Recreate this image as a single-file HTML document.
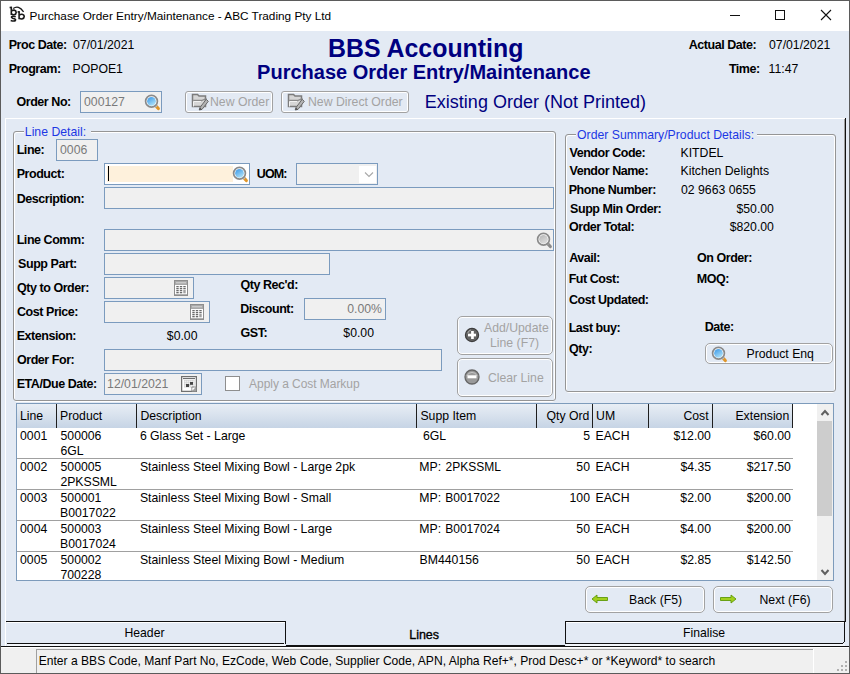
<!DOCTYPE html>
<html><head><meta charset="utf-8"><style>
html,body{margin:0;padding:0;width:850px;height:674px;overflow:hidden;background:#fff;}
body{position:relative;font-family:"Liberation Sans",sans-serif;}
.t{position:absolute;white-space:pre;}
.b{position:absolute;}
</style></head><body>
<div class="b" style="left:0px;top:0px;width:850px;height:674px;background:#5B5B5B;"></div>
<div class="b" style="left:1px;top:1px;width:848px;height:30px;background:#FFFFFF;"></div>
<div class="b" style="left:1px;top:31px;width:848px;height:616px;background:#E3EAF4;"></div>
<div class="b" style="left:1px;top:647px;width:848px;height:26px;background:#F0F0F0;"></div>
<svg class="b" style="left:0px;top:0px" width="30" height="30" viewBox="0 0 30 30">
<g fill="none" stroke="#1A1A1A" stroke-width="1.6">
<path d="M11.3 6.8 V15"/><path d="M9.6 7.5 H12"/>
<path d="M11.5 10.9 Q12.8 10 14.2 10.1 Q16.2 10.5 16.2 12.4 Q16.1 14.4 14.2 14.7 Q12.7 14.9 11.5 14"/>
<path d="M15.7 16.7 Q13.2 15.8 11.8 16.6 Q10.9 17.5 12.6 18.2 L14.3 18.7 Q16 19.3 15.4 20.5 Q14 21.6 10.7 20.4"/>
<path d="M19.1 11.2 V19.2"/><path d="M17.6 11.9 H19.6"/>
<path d="M19.3 15.1 Q20.6 14.2 22 14.3 Q24.2 14.7 24.2 16.6 Q24.1 18.6 22 18.9 Q20.5 19.1 19.3 18.2"/>
</g>
<path d="M13.2 8.6 Q18.5 4.6 23.6 11.8" fill="none" stroke="#1A1A1A" stroke-width="1.3"/>
</svg>
<div class="t" style="left:29.56px;top:11px;font-size:11.8px;line-height:11.8px;font-weight:normal;color:#000;">Purchase Order Entry/Maintenance - ABC Trading Pty Ltd</div>
<div class="b" style="left:730px;top:15px;width:10px;height:1px;background:#111;"></div>
<div class="b" style="left:775px;top:10px;width:10px;height:10px;border:1px solid #111;box-sizing:border-box;"></div>
<svg class="b" style="left:820px;top:9px" width="12" height="12" viewBox="0 0 12 12"><path d="M1 1 L11 11 M11 1 L1 11" stroke="#111" stroke-width="1.1"/></svg>
<div class="t" style="left:8.69px;top:39px;font-size:12.5px;line-height:12.5px;font-weight:bold;color:#000;letter-spacing:-0.45px;">Proc Date:</div>
<div class="t" style="left:73.01px;top:39px;font-size:12.25px;line-height:12.25px;font-weight:normal;color:#000;">07/01/2021</div>
<div class="t" style="left:8.69px;top:63px;font-size:12.5px;line-height:12.5px;font-weight:bold;color:#000;letter-spacing:-0.45px;">Program:</div>
<div class="t" style="left:72.52px;top:63px;font-size:12.25px;line-height:12.25px;font-weight:normal;color:#000;">POPOE1</div>
<div class="t" style="left:327.98px;top:36px;font-size:24.9px;line-height:24.9px;font-weight:bold;color:#000080;">BBS Accounting</div>
<div class="t" style="left:257.10px;top:62px;font-size:20.0px;line-height:20.0px;font-weight:bold;color:#000080;">Purchase Order Entry/Maintenance</div>
<div class="t" style="left:688.69px;top:39px;font-size:12.5px;line-height:12.5px;font-weight:bold;color:#000;letter-spacing:-0.45px;">Actual Date:</div>
<div class="t" style="left:769.01px;top:39px;font-size:12.25px;line-height:12.25px;font-weight:normal;color:#000;">07/01/2021</div>
<div class="t" style="left:728.88px;top:63px;font-size:12.5px;line-height:12.5px;font-weight:bold;color:#000;letter-spacing:-0.45px;">Time:</div>
<div class="t" style="left:768.58px;top:63px;font-size:12.25px;line-height:12.25px;font-weight:normal;color:#000;">11:47</div>
<div class="t" style="left:16.50px;top:96px;font-size:12.5px;line-height:12.5px;font-weight:bold;color:#000;letter-spacing:-0.45px;">Order No:</div>
<div class="b" style="left:80px;top:91px;width:82px;height:22px;border:1px solid #7B9BBE;background:#F0F0F0;box-sizing:border-box;"></div>
<div class="t" style="left:84.01px;top:96px;font-size:12.25px;line-height:12.25px;font-weight:normal;color:#7A7A7A;">000127</div>
<svg class="b" style="left:144px;top:93.5px" width="17" height="17" viewBox="0 0 17 17">
<defs><linearGradient id="mg1" x1="0.2" y1="0" x2="0.8" y2="1"><stop offset="0" stop-color="#3F9BE8"/><stop offset="1" stop-color="#B5E6FA"/></linearGradient></defs>
<path d="M12 12 L14.3 14.5" stroke="#E0962A" stroke-width="3.2" stroke-linecap="round"/>
<path d="M11.2 11.2 L12.6 12.6" stroke="#B8C8D8" stroke-width="2.4"/>
<circle cx="7.5" cy="7.3" r="5.9" fill="#FFFFFF" stroke="#8A8A8A" stroke-width="1.7"/>
<circle cx="7.5" cy="7.3" r="4.4" fill="url(#mg1)"/>
</svg>
<div class="b" style="left:185px;top:91px;width:88px;height:22px;border:1px solid #A2A2A2;border-radius:3px;box-shadow:inset 0 0 0 1px #FFFFFF;box-sizing:border-box;background:transparent;"></div>
<svg class="b" style="left:191px;top:93px" width="19" height="19" viewBox="0 0 19 19">
<path d="M1.5 1.5 H6.5 L8 3 H14.5 V13.5 H1.5 Z" fill="#D6D6D6" stroke="#7C7C7C" stroke-width="1.5"/>
<path d="M2.2 7.5 H10.5 L15.5 5.5" fill="none" stroke="#8A8A8A" stroke-width="1.3"/>
<path d="M2.5 13.5 L2.5 8.5 H10" fill="none" stroke="#F2F2F2" stroke-width="1"/>
<path d="M9 14.5 L15.2 6.3 L17.3 8.3 L11 16.4 L8.2 17 Z" fill="#B4B4B4" stroke="#6A6A6A" stroke-width="1"/>
<path d="M8.2 17 L9 14.5 L11 16.4 Z" fill="#505050"/>
</svg>
<div class="t" style="left:210.02px;top:96px;font-size:12.25px;line-height:12.25px;font-weight:normal;color:#A3A3A3;">New Order</div>
<div class="b" style="left:281px;top:91px;width:128px;height:22px;border:1px solid #A2A2A2;border-radius:3px;box-shadow:inset 0 0 0 1px #FFFFFF;box-sizing:border-box;background:transparent;"></div>
<svg class="b" style="left:287px;top:93px" width="19" height="19" viewBox="0 0 19 19">
<path d="M1.5 1.5 H6.5 L8 3 H14.5 V13.5 H1.5 Z" fill="#D6D6D6" stroke="#7C7C7C" stroke-width="1.5"/>
<path d="M2.2 7.5 H10.5 L15.5 5.5" fill="none" stroke="#8A8A8A" stroke-width="1.3"/>
<path d="M2.5 13.5 L2.5 8.5 H10" fill="none" stroke="#F2F2F2" stroke-width="1"/>
<path d="M9 14.5 L15.2 6.3 L17.3 8.3 L11 16.4 L8.2 17 Z" fill="#B4B4B4" stroke="#6A6A6A" stroke-width="1"/>
<path d="M8.2 17 L9 14.5 L11 16.4 Z" fill="#505050"/>
</svg>
<div class="t" style="left:308.02px;top:96px;font-size:12.25px;line-height:12.25px;font-weight:normal;color:#A3A3A3;">New Direct Order</div>
<div class="t" style="left:424.86px;top:93.3px;font-size:18.0px;line-height:18.0px;font-weight:normal;color:#000080;">Existing Order (Not Printed)</div>
<div class="b" style="left:5px;top:118px;width:841px;height:528px;border-top:1px solid #FFFFFF;border-left:1px solid #FFFFFF;box-sizing:border-box;"></div>
<div class="b" style="left:845px;top:118px;width:1px;height:504px;background:#111;"></div>
<div class="b" style="left:844px;top:119px;width:1px;height:502px;background:#A0A0A0;"></div>
<div class="b" style="left:14px;top:132px;width:541px;height:270px;border:1px solid #FFFFFF;border-radius:3px;box-sizing:border-box;"></div>
<div class="b" style="left:13px;top:131px;width:543px;height:270px;border:1px solid #959595;border-radius:3px;box-sizing:border-box;"></div>
<div class="b" style="left:24px;top:130px;width:67px;height:4px;background:#E3EAF4;"></div>
<div class="t" style="left:24.82px;top:126px;font-size:12.25px;line-height:12.25px;font-weight:normal;color:#1C38E4;">Line Detail:</div>
<div class="b" style="left:566px;top:135px;width:269px;height:258px;border:1px solid #FFFFFF;border-radius:3px;box-sizing:border-box;"></div>
<div class="b" style="left:565px;top:134px;width:271px;height:258px;border:1px solid #959595;border-radius:3px;box-sizing:border-box;"></div>
<div class="b" style="left:576px;top:133px;width:181px;height:4px;background:#E3EAF4;"></div>
<div class="t" style="left:577.05px;top:129px;font-size:12.25px;line-height:12.25px;font-weight:normal;color:#1C38E4;">Order Summary/Product Details:</div>
<div class="t" style="left:16.69px;top:144px;font-size:12.5px;line-height:12.5px;font-weight:bold;color:#000;letter-spacing:-0.45px;">Line:</div>
<div class="b" style="left:56px;top:139px;width:42px;height:22px;border:1px solid #7B9BBE;background:#F0F0F0;box-sizing:border-box;"></div>
<div class="t" style="left:60.01px;top:144px;font-size:12.25px;line-height:12.25px;font-weight:normal;color:#7A7A7A;">0006</div>
<div class="t" style="left:16.69px;top:168px;font-size:12.5px;line-height:12.5px;font-weight:bold;color:#000;letter-spacing:-0.45px;">Product:</div>
<div class="b" style="left:104px;top:163px;width:146px;height:22px;border:1px solid #7B9BBE;background:#FFFFFF;box-sizing:border-box;"></div>
<div class="b" style="left:107px;top:166px;width:126px;height:16px;background:#FEF1DC;"></div>
<div class="b" style="left:108px;top:166px;width:1px;height:15px;background:#000;"></div>
<svg class="b" style="left:232px;top:165.5px" width="17" height="17" viewBox="0 0 17 17">
<defs><linearGradient id="mg2" x1="0.2" y1="0" x2="0.8" y2="1"><stop offset="0" stop-color="#3F9BE8"/><stop offset="1" stop-color="#B5E6FA"/></linearGradient></defs>
<path d="M12 12 L14.3 14.5" stroke="#E0962A" stroke-width="3.2" stroke-linecap="round"/>
<path d="M11.2 11.2 L12.6 12.6" stroke="#B8C8D8" stroke-width="2.4"/>
<circle cx="7.5" cy="7.3" r="5.9" fill="#FFFFFF" stroke="#8A8A8A" stroke-width="1.7"/>
<circle cx="7.5" cy="7.3" r="4.4" fill="url(#mg2)"/>
</svg>
<div class="t" style="left:256.75px;top:168px;font-size:12.5px;line-height:12.5px;font-weight:bold;color:#000;letter-spacing:-0.9px;">UOM:</div>
<div class="b" style="left:296px;top:163px;width:82px;height:22px;border:1px solid #7B9BBE;background:#F0F0F0;box-sizing:border-box;"></div>
<div class="b" style="left:359px;top:166px;width:17px;height:17px;background:#FFFFFF;"></div>
<svg class="b" style="left:364px;top:171px" width="10" height="8" viewBox="0 0 10 8"><path d="M1 1.5 L5 5.5 L9 1.5" fill="none" stroke="#A8A8A8" stroke-width="1.1"/></svg>
<div class="t" style="left:16.69px;top:193px;font-size:12.5px;line-height:12.5px;font-weight:bold;color:#000;letter-spacing:-0.45px;">Description:</div>
<div class="b" style="left:104px;top:187px;width:450px;height:22px;border:1px solid #7B9BBE;background:#F0F0F0;box-sizing:border-box;"></div>
<div class="t" style="left:16.69px;top:234px;font-size:12.5px;line-height:12.5px;font-weight:bold;color:#000;letter-spacing:-0.45px;">Line Comm:</div>
<div class="b" style="left:104px;top:229px;width:450px;height:22px;border:1px solid #7B9BBE;background:#F0F0F0;box-sizing:border-box;"></div>
<svg class="b" style="left:536px;top:231.5px" width="17" height="17" viewBox="0 0 17 17">
<defs><linearGradient id="mg3" x1="0.2" y1="0" x2="0.8" y2="1"><stop offset="0" stop-color="#B8B8B8"/><stop offset="1" stop-color="#E0E0E0"/></linearGradient></defs>
<path d="M12 12 L14.3 14.5" stroke="#8A8A8A" stroke-width="3.2" stroke-linecap="round"/>
<path d="M11.2 11.2 L12.6 12.6" stroke="#A0A0A0" stroke-width="2.4"/>
<circle cx="7.5" cy="7.3" r="5.9" fill="#FFFFFF" stroke="#8A8A8A" stroke-width="1.7"/>
<circle cx="7.5" cy="7.3" r="4.4" fill="url(#mg3)"/>
</svg>
<div class="t" style="left:18.12px;top:258px;font-size:12.5px;line-height:12.5px;font-weight:bold;color:#000;letter-spacing:-0.45px;">Supp Part:</div>
<div class="b" style="left:104px;top:253px;width:226px;height:22px;border:1px solid #7B9BBE;background:#F0F0F0;box-sizing:border-box;"></div>
<div class="t" style="left:17.00px;top:282px;font-size:12.5px;line-height:12.5px;font-weight:bold;color:#000;letter-spacing:-0.45px;">Qty to Order:</div>
<div class="b" style="left:104px;top:277px;width:90px;height:22px;border:1px solid #7B9BBE;background:#F0F0F0;box-sizing:border-box;"></div>
<svg class="b" style="left:174px;top:280px" width="14" height="16" viewBox="0 0 14 16">
<rect x="0" y="0" width="14" height="16" fill="#8E8E8E"/>
<rect x="1" y="1" width="12" height="4" fill="#A9A9A9"/>
<rect x="2" y="2" width="10" height="1.4" fill="#C9C9C9"/>
<rect x="1" y="5" width="12" height="9.3" fill="#FFFFFF"/>
<g fill="#6A6A6A"><rect x="2.3" y="6" width="2.4" height="1.3"/><rect x="5.8" y="6" width="2.4" height="1.3"/><rect x="9.3" y="6" width="2.4" height="1.3"/>
<rect x="2.3" y="8" width="2.4" height="1.3"/><rect x="5.8" y="8" width="2.4" height="1.3"/><rect x="9.3" y="8" width="2.4" height="1.3"/>
<rect x="2.3" y="10" width="2.4" height="1.3"/><rect x="5.8" y="10" width="2.4" height="1.3"/>
<rect x="2.3" y="12" width="2.4" height="1.3"/><rect x="5.8" y="12" width="2.4" height="1.3"/></g>
<rect x="9.3" y="10" width="2.4" height="3.3" fill="#A0A0A0"/>
</svg>
<div class="t" style="left:17.00px;top:306px;font-size:12.5px;line-height:12.5px;font-weight:bold;color:#000;letter-spacing:-0.45px;">Cost Price:</div>
<div class="b" style="left:104px;top:301px;width:106px;height:22px;border:1px solid #7B9BBE;background:#F0F0F0;box-sizing:border-box;"></div>
<svg class="b" style="left:190px;top:304px" width="14" height="16" viewBox="0 0 14 16">
<rect x="0" y="0" width="14" height="16" fill="#8E8E8E"/>
<rect x="1" y="1" width="12" height="4" fill="#A9A9A9"/>
<rect x="2" y="2" width="10" height="1.4" fill="#C9C9C9"/>
<rect x="1" y="5" width="12" height="9.3" fill="#FFFFFF"/>
<g fill="#6A6A6A"><rect x="2.3" y="6" width="2.4" height="1.3"/><rect x="5.8" y="6" width="2.4" height="1.3"/><rect x="9.3" y="6" width="2.4" height="1.3"/>
<rect x="2.3" y="8" width="2.4" height="1.3"/><rect x="5.8" y="8" width="2.4" height="1.3"/><rect x="9.3" y="8" width="2.4" height="1.3"/>
<rect x="2.3" y="10" width="2.4" height="1.3"/><rect x="5.8" y="10" width="2.4" height="1.3"/>
<rect x="2.3" y="12" width="2.4" height="1.3"/><rect x="5.8" y="12" width="2.4" height="1.3"/></g>
<rect x="9.3" y="10" width="2.4" height="3.3" fill="#A0A0A0"/>
</svg>
<div class="t" style="left:16.69px;top:330px;font-size:12.5px;line-height:12.5px;font-weight:bold;color:#000;letter-spacing:-0.45px;">Extension:</div>
<div class="t" style="right:652.54px;top:330px;font-size:12.25px;line-height:12.25px;font-weight:normal;color:#000;">$0.00</div>
<div class="t" style="left:240.50px;top:279px;font-size:12.5px;line-height:12.5px;font-weight:bold;color:#000;letter-spacing:-0.45px;">Qty Rec'd:</div>
<div class="t" style="left:240.19px;top:303px;font-size:12.5px;line-height:12.5px;font-weight:bold;color:#000;letter-spacing:-0.45px;">Discount:</div>
<div class="b" style="left:304px;top:298px;width:82px;height:22px;border:1px solid #7B9BBE;background:#F0F0F0;box-sizing:border-box;"></div>
<div class="t" style="right:468.07px;top:303px;font-size:12.25px;line-height:12.25px;font-weight:normal;color:#7A7A7A;">0.00%</div>
<div class="t" style="left:240.50px;top:327px;font-size:12.5px;line-height:12.5px;font-weight:bold;color:#000;letter-spacing:-0.45px;">GST:</div>
<div class="t" style="right:476.04px;top:327px;font-size:12.25px;line-height:12.25px;font-weight:normal;color:#000;">$0.00</div>
<div class="t" style="left:17.00px;top:354px;font-size:12.5px;line-height:12.5px;font-weight:bold;color:#000;letter-spacing:-0.45px;">Order For:</div>
<div class="b" style="left:104px;top:349px;width:338px;height:22px;border:1px solid #7B9BBE;background:#F0F0F0;box-sizing:border-box;"></div>
<div class="t" style="left:16.69px;top:378px;font-size:12.5px;line-height:12.5px;font-weight:bold;color:#000;letter-spacing:-0.45px;">ETA/Due Date:</div>
<div class="b" style="left:104px;top:373px;width:98px;height:22px;border:1px solid #7B9BBE;background:#F0F0F0;box-sizing:border-box;"></div>
<div class="t" style="left:107.08px;top:378px;font-size:12.25px;line-height:12.25px;font-weight:normal;color:#7A7A7A;">12/01/2021</div>
<svg class="b" style="left:181px;top:376px" width="16" height="16" viewBox="0 0 16 16">
<rect x="0.6" y="0.6" width="14.8" height="14.8" fill="#FFFFFF" stroke="#707070" stroke-width="1.3"/>
<rect x="2" y="2" width="12" height="1.1" fill="#6E6E6E"/>
<rect x="3" y="4" width="10.5" height="7.6" fill="#CFCFCF"/>
<g fill="#FFFFFF"><rect x="3.6" y="4.6" width="1.2" height="1.2"/><rect x="5.6" y="4.6" width="1.2" height="1.2"/><rect x="7.6" y="4.6" width="1.2" height="1.2"/><rect x="9.6" y="4.6" width="1.2" height="1.2"/><rect x="11.6" y="4.6" width="1.2" height="1.2"/>
<rect x="3.6" y="6.6" width="1.2" height="1.2"/><rect x="5.6" y="6.6" width="1.2" height="1.2"/><rect x="7.6" y="6.6" width="1.2" height="1.2"/><rect x="11.6" y="6.6" width="1.2" height="1.2"/>
<rect x="3.6" y="8.6" width="1.2" height="1.2"/><rect x="9.6" y="8.6" width="1.2" height="1.2"/><rect x="11.6" y="8.6" width="1.2" height="1.2"/>
<rect x="3.6" y="10.4" width="1.2" height="1.2"/><rect x="5.6" y="10.4" width="1.2" height="1.2"/><rect x="7.6" y="10.4" width="1.2" height="1.2"/><rect x="9.6" y="10.4" width="1.2" height="1.2"/></g>
<rect x="5" y="8" width="3" height="3" fill="#454545"/><rect x="9" y="6" width="3" height="2.8" fill="#454545"/>
<path d="M10.6 15.4 L15.4 10.6 V15.4 Z" fill="#A0A0A0"/>
<path d="M10.8 15.2 V11 H15" fill="none" stroke="#808080" stroke-width="0.8"/>
</svg>
<div class="b" style="left:225px;top:376px;width:15px;height:15px;border:1.5px solid #8E8E8E;background:#FFFFFF;box-sizing:border-box;"></div>
<div class="t" style="left:249.10px;top:378px;font-size:12.0px;line-height:12.0px;font-weight:normal;color:#A3A3A3;letter-spacing:-0.05px;">Apply a Cost Markup</div>
<div class="b" style="left:457px;top:316px;width:96px;height:39px;border:1px solid #A2A2A2;border-radius:5px;box-shadow:inset 0 0 0 1px #FFFFFF;box-sizing:border-box;background:transparent;"></div>
<svg class="b" style="left:463px;top:326px" width="18" height="18" viewBox="0 0 18 18">
<circle cx="9" cy="9" r="6.6" fill="#636363" stroke="#3E3E3E" stroke-width="1.2"/>
<path d="M4.6 7.2 A5.2 5.2 0 0 1 8 3.9" fill="none" stroke="#B8B8B8" stroke-width="0.9"/>
<rect x="5" y="7.7" width="8" height="2.7" fill="#FFFFFF"/><rect x="8.1" y="5" width="2.7" height="8" fill="#FFFFFF"/></svg>
<div class="t" style="left:484.00px;top:322px;font-size:12.25px;line-height:12.25px;font-weight:normal;color:#A3A3A3;">Add/Update</div>
<div class="t" style="left:490.02px;top:337px;font-size:12.25px;line-height:12.25px;font-weight:normal;color:#A3A3A3;">Line (F7)</div>
<div class="b" style="left:457px;top:358px;width:96px;height:39px;border:1px solid #A2A2A2;border-radius:5px;box-shadow:inset 0 0 0 1px #FFFFFF;box-sizing:border-box;background:transparent;"></div>
<svg class="b" style="left:462.5px;top:367.8px" width="18" height="18" viewBox="0 0 18 18">
<circle cx="9" cy="9" r="7" fill="#9A9A9A" stroke="#666666" stroke-width="1.3"/>
<path d="M3.9 8 A5.4 5.4 0 0 1 14.1 8" fill="none" stroke="#C6C6C6" stroke-width="0.9"/>
<rect x="4.5" y="7.3" width="9" height="3" fill="#FFFFFF"/></svg>
<div class="t" style="left:487.89px;top:372px;font-size:12.25px;line-height:12.25px;font-weight:normal;color:#A3A3A3;">Clear Line</div>
<div class="t" style="left:569.44px;top:147px;font-size:12.5px;line-height:12.5px;font-weight:bold;color:#000;letter-spacing:-0.45px;">Vendor Code:</div>
<div class="t" style="left:680.52px;top:147px;font-size:12.25px;line-height:12.25px;font-weight:normal;color:#000;">KITDEL</div>
<div class="t" style="left:569.44px;top:165px;font-size:12.5px;line-height:12.5px;font-weight:bold;color:#000;letter-spacing:-0.45px;">Vendor Name:</div>
<div class="t" style="left:680.52px;top:165px;font-size:12.25px;line-height:12.25px;font-weight:normal;color:#000;">Kitchen Delights</div>
<div class="t" style="left:568.69px;top:184px;font-size:12.5px;line-height:12.5px;font-weight:bold;color:#000;letter-spacing:-0.45px;">Phone Number:</div>
<div class="t" style="left:681.01px;top:184px;font-size:12.25px;line-height:12.25px;font-weight:normal;color:#000;">02 9663 0655</div>
<div class="t" style="left:570.12px;top:203px;font-size:12.5px;line-height:12.5px;font-weight:bold;color:#000;letter-spacing:-0.45px;">Supp Min Order:</div>
<div class="t" style="right:76.09px;top:203px;font-size:12.25px;line-height:12.25px;font-weight:normal;color:#000;">$50.00</div>
<div class="t" style="left:569.00px;top:221px;font-size:12.5px;line-height:12.5px;font-weight:bold;color:#000;letter-spacing:-0.45px;">Order Total:</div>
<div class="t" style="right:76.07px;top:221px;font-size:12.25px;line-height:12.25px;font-weight:normal;color:#000;">$820.00</div>
<div class="t" style="left:569.19px;top:252px;font-size:12.5px;line-height:12.5px;font-weight:bold;color:#000;letter-spacing:-0.45px;">Avail:</div>
<div class="t" style="left:697.00px;top:252px;font-size:12.5px;line-height:12.5px;font-weight:bold;color:#000;letter-spacing:-0.45px;">On Order:</div>
<div class="t" style="left:568.69px;top:273px;font-size:12.5px;line-height:12.5px;font-weight:bold;color:#000;letter-spacing:-0.45px;">Fut Cost:</div>
<div class="t" style="left:696.69px;top:273px;font-size:12.5px;line-height:12.5px;font-weight:bold;color:#000;letter-spacing:-0.45px;">MOQ:</div>
<div class="t" style="left:569.00px;top:294px;font-size:12.5px;line-height:12.5px;font-weight:bold;color:#000;letter-spacing:-0.45px;">Cost Updated:</div>
<div class="t" style="left:568.69px;top:322px;font-size:12.5px;line-height:12.5px;font-weight:bold;color:#000;letter-spacing:-0.45px;">Last buy:</div>
<div class="t" style="left:704.69px;top:321px;font-size:12.5px;line-height:12.5px;font-weight:bold;color:#000;letter-spacing:-0.45px;">Date:</div>
<div class="t" style="left:569.00px;top:343px;font-size:12.5px;line-height:12.5px;font-weight:bold;color:#000;letter-spacing:-0.45px;">Qty:</div>
<div class="b" style="left:705px;top:343px;width:128px;height:21px;border:1px solid #A2A2A2;border-radius:5px;box-shadow:inset 0 0 0 1px #FFFFFF;box-sizing:border-box;background:transparent;"></div>
<svg class="b" style="left:711px;top:345.5px" width="17" height="17" viewBox="0 0 17 17">
<defs><linearGradient id="mg4" x1="0.2" y1="0" x2="0.8" y2="1"><stop offset="0" stop-color="#3F9BE8"/><stop offset="1" stop-color="#B5E6FA"/></linearGradient></defs>
<path d="M12 12 L14.3 14.5" stroke="#E0962A" stroke-width="3.2" stroke-linecap="round"/>
<path d="M11.2 11.2 L12.6 12.6" stroke="#B8C8D8" stroke-width="2.4"/>
<circle cx="7.5" cy="7.3" r="5.9" fill="#FFFFFF" stroke="#8A8A8A" stroke-width="1.7"/>
<circle cx="7.5" cy="7.3" r="4.4" fill="url(#mg4)"/>
</svg>
<div class="t" style="left:746.52px;top:348px;font-size:12.25px;line-height:12.25px;font-weight:normal;color:#000;">Product Enq</div>
<div class="b" style="left:16px;top:403px;width:818px;height:178px;border:1px solid #7D9BBB;background:#FFFFFF;box-sizing:border-box;"></div>
<div class="b" style="left:17px;top:404px;width:776px;height:24px;background:linear-gradient(#E8EEF5,#C6D4E5);"></div>
<div class="b" style="left:56px;top:404px;width:1px;height:24px;background:#1E1E1E;"></div>
<div class="b" style="left:136px;top:404px;width:1px;height:24px;background:#1E1E1E;"></div>
<div class="b" style="left:416px;top:404px;width:1px;height:24px;background:#1E1E1E;"></div>
<div class="b" style="left:536px;top:404px;width:1px;height:24px;background:#1E1E1E;"></div>
<div class="b" style="left:592px;top:404px;width:1px;height:24px;background:#1E1E1E;"></div>
<div class="b" style="left:648px;top:404px;width:1px;height:24px;background:#1E1E1E;"></div>
<div class="b" style="left:712px;top:404px;width:1px;height:24px;background:#1E1E1E;"></div>
<div class="b" style="left:792px;top:404px;width:1px;height:24px;background:#1E1E1E;"></div>
<div class="t" style="left:20.02px;top:410px;font-size:12.25px;line-height:12.25px;font-weight:normal;color:#000;">Line</div>
<div class="t" style="left:60.02px;top:410px;font-size:12.25px;line-height:12.25px;font-weight:normal;color:#000;">Product</div>
<div class="t" style="left:140.42px;top:410px;font-size:12.25px;line-height:12.25px;font-weight:normal;color:#000;">Description</div>
<div class="t" style="left:420.45px;top:410px;font-size:12.25px;line-height:12.25px;font-weight:normal;color:#000;">Supp Item</div>
<div class="t" style="right:260.66px;top:410px;font-size:12.25px;line-height:12.25px;font-weight:normal;color:#000;">Qty Ord</div>
<div class="t" style="left:596.08px;top:410px;font-size:12.25px;line-height:12.25px;font-weight:normal;color:#000;">UM</div>
<div class="t" style="right:141.42px;top:410px;font-size:12.25px;line-height:12.25px;font-weight:normal;color:#000;">Cost</div>
<div class="t" style="right:60.74px;top:410px;font-size:12.25px;line-height:12.25px;font-weight:normal;color:#000;">Extension</div>
<div class="t" style="left:20.01px;top:430px;font-size:12.25px;line-height:12.25px;font-weight:normal;color:#000;">0001</div>
<div class="t" style="left:60.51px;top:430px;font-size:12.25px;line-height:12.25px;font-weight:normal;color:#000;">500006</div>
<div class="t" style="left:60.39px;top:445px;font-size:12.25px;line-height:12.25px;font-weight:normal;color:#000;">6GL</div>
<div class="t" style="left:139.89px;top:430px;font-size:12.25px;line-height:12.25px;font-weight:normal;color:#000;">6 Glass Set - Large</div>
<div class="t" style="left:422.99px;top:430px;font-size:12.25px;line-height:12.25px;font-weight:normal;color:#000;">6GL</div>
<div class="t" style="right:260.00px;top:430px;font-size:12.25px;line-height:12.25px;font-weight:normal;color:#000;">5</div>
<div class="t" style="left:595.52px;top:430px;font-size:12.25px;line-height:12.25px;font-weight:normal;color:#000;">EACH</div>
<div class="t" style="right:139.09px;top:430px;font-size:12.25px;line-height:12.25px;font-weight:normal;color:#000;">$12.00</div>
<div class="t" style="right:59.09px;top:430px;font-size:12.25px;line-height:12.25px;font-weight:normal;color:#000;">$60.00</div>
<div class="b" style="left:17px;top:458px;width:776px;height:1px;background:#A0A0A0;"></div>
<div class="t" style="left:20.01px;top:461px;font-size:12.25px;line-height:12.25px;font-weight:normal;color:#000;">0002</div>
<div class="t" style="left:60.51px;top:461px;font-size:12.25px;line-height:12.25px;font-weight:normal;color:#000;">500005</div>
<div class="t" style="left:60.39px;top:476px;font-size:12.25px;line-height:12.25px;font-weight:normal;color:#000;">2PKSSML</div>
<div class="t" style="left:139.95px;top:461px;font-size:12.25px;line-height:12.25px;font-weight:normal;color:#000;">Stainless Steel Mixing Bowl - Large 2pk</div>
<div class="t" style="left:419.32px;top:461px;font-size:12.25px;line-height:12.25px;font-weight:normal;color:#000;">MP:</div>
<div class="t" style="left:445.60px;top:461px;font-size:12.0px;line-height:12.0px;font-weight:normal;color:#000;">2PKSSML</div>
<div class="t" style="right:260.04px;top:461px;font-size:12.25px;line-height:12.25px;font-weight:normal;color:#000;">50</div>
<div class="t" style="left:595.52px;top:461px;font-size:12.25px;line-height:12.25px;font-weight:normal;color:#000;">EACH</div>
<div class="t" style="right:138.98px;top:461px;font-size:12.25px;line-height:12.25px;font-weight:normal;color:#000;">$4.35</div>
<div class="t" style="right:59.07px;top:461px;font-size:12.25px;line-height:12.25px;font-weight:normal;color:#000;">$217.50</div>
<div class="b" style="left:17px;top:489px;width:776px;height:1px;background:#A0A0A0;"></div>
<div class="t" style="left:20.01px;top:492px;font-size:12.25px;line-height:12.25px;font-weight:normal;color:#000;">0003</div>
<div class="t" style="left:60.51px;top:492px;font-size:12.25px;line-height:12.25px;font-weight:normal;color:#000;">500001</div>
<div class="t" style="left:60.02px;top:507px;font-size:12.25px;line-height:12.25px;font-weight:normal;color:#000;">B0017022</div>
<div class="t" style="left:139.95px;top:492px;font-size:12.25px;line-height:12.25px;font-weight:normal;color:#000;">Stainless Steel Mixing Bowl - Small</div>
<div class="t" style="left:419.32px;top:492px;font-size:12.25px;line-height:12.25px;font-weight:normal;color:#000;">MP:</div>
<div class="t" style="left:445.24px;top:492px;font-size:12.0px;line-height:12.0px;font-weight:normal;color:#000;">B0017022</div>
<div class="t" style="right:260.03px;top:492px;font-size:12.25px;line-height:12.25px;font-weight:normal;color:#000;">100</div>
<div class="t" style="left:595.52px;top:492px;font-size:12.25px;line-height:12.25px;font-weight:normal;color:#000;">EACH</div>
<div class="t" style="right:139.04px;top:492px;font-size:12.25px;line-height:12.25px;font-weight:normal;color:#000;">$2.00</div>
<div class="t" style="right:59.07px;top:492px;font-size:12.25px;line-height:12.25px;font-weight:normal;color:#000;">$200.00</div>
<div class="b" style="left:17px;top:520px;width:776px;height:1px;background:#A0A0A0;"></div>
<div class="t" style="left:20.01px;top:523px;font-size:12.25px;line-height:12.25px;font-weight:normal;color:#000;">0004</div>
<div class="t" style="left:60.51px;top:523px;font-size:12.25px;line-height:12.25px;font-weight:normal;color:#000;">500003</div>
<div class="t" style="left:60.02px;top:538px;font-size:12.25px;line-height:12.25px;font-weight:normal;color:#000;">B0017024</div>
<div class="t" style="left:139.95px;top:523px;font-size:12.25px;line-height:12.25px;font-weight:normal;color:#000;">Stainless Steel Mixing Bowl - Large</div>
<div class="t" style="left:419.32px;top:523px;font-size:12.25px;line-height:12.25px;font-weight:normal;color:#000;">MP:</div>
<div class="t" style="left:445.24px;top:523px;font-size:12.0px;line-height:12.0px;font-weight:normal;color:#000;">B0017024</div>
<div class="t" style="right:260.04px;top:523px;font-size:12.25px;line-height:12.25px;font-weight:normal;color:#000;">50</div>
<div class="t" style="left:595.52px;top:523px;font-size:12.25px;line-height:12.25px;font-weight:normal;color:#000;">EACH</div>
<div class="t" style="right:139.04px;top:523px;font-size:12.25px;line-height:12.25px;font-weight:normal;color:#000;">$4.00</div>
<div class="t" style="right:59.07px;top:523px;font-size:12.25px;line-height:12.25px;font-weight:normal;color:#000;">$200.00</div>
<div class="b" style="left:17px;top:551px;width:776px;height:1px;background:#A0A0A0;"></div>
<div class="t" style="left:20.01px;top:554px;font-size:12.25px;line-height:12.25px;font-weight:normal;color:#000;">0005</div>
<div class="t" style="left:60.51px;top:554px;font-size:12.25px;line-height:12.25px;font-weight:normal;color:#000;">500002</div>
<div class="t" style="left:60.39px;top:569px;font-size:12.25px;line-height:12.25px;font-weight:normal;color:#000;">700228</div>
<div class="t" style="left:139.95px;top:554px;font-size:12.25px;line-height:12.25px;font-weight:normal;color:#000;">Stainless Steel Mixing Bowl - Medium</div>
<div class="t" style="left:419.62px;top:554px;font-size:12.25px;line-height:12.25px;font-weight:normal;color:#000;">BM440156</div>
<div class="t" style="right:260.04px;top:554px;font-size:12.25px;line-height:12.25px;font-weight:normal;color:#000;">50</div>
<div class="t" style="left:595.52px;top:554px;font-size:12.25px;line-height:12.25px;font-weight:normal;color:#000;">EACH</div>
<div class="t" style="right:138.98px;top:554px;font-size:12.25px;line-height:12.25px;font-weight:normal;color:#000;">$2.85</div>
<div class="t" style="right:59.07px;top:554px;font-size:12.25px;line-height:12.25px;font-weight:normal;color:#000;">$142.50</div>
<div class="b" style="left:817px;top:404px;width:16px;height:176px;background:#F0F0F0;"></div>
<div class="b" style="left:817px;top:421px;width:15px;height:95px;background:#CDCDCD;"></div>
<svg class="b" style="left:820px;top:408px" width="10" height="9" viewBox="0 0 10 9"><path d="M1.5 7 L5 3 L8.5 7" fill="none" stroke="#606060" stroke-width="2"/></svg>
<svg class="b" style="left:820px;top:567.5px" width="10" height="9" viewBox="0 0 10 9"><path d="M1.5 2 L5 6 L8.5 2" fill="none" stroke="#606060" stroke-width="2"/></svg>
<div class="b" style="left:585px;top:586px;width:120px;height:27px;border:1px solid #A2A2A2;border-radius:5px;box-shadow:inset 0 0 0 1px #FFFFFF;box-sizing:border-box;background:transparent;"></div>
<svg class="b" style="left:591px;top:594px" width="18" height="10" viewBox="0 0 18 10"><path d="M1 5 L6 1 V3.5 H16.5 V6.5 H6 V9 Z" fill="#A2CF1E" stroke="#5E9A08" stroke-width="0.9"/></svg>
<div class="t" style="left:629.02px;top:594px;font-size:12.25px;line-height:12.25px;font-weight:normal;color:#000;">Back (F5)</div>
<div class="b" style="left:713px;top:586px;width:120px;height:27px;border:1px solid #A2A2A2;border-radius:5px;box-shadow:inset 0 0 0 1px #FFFFFF;box-sizing:border-box;background:transparent;"></div>
<svg class="b" style="left:719px;top:594px" width="18" height="10" viewBox="0 0 18 10"><path d="M17 5 L12 1 V3.5 H1.5 V6.5 H12 V9 Z" fill="#A2CF1E" stroke="#5E9A08" stroke-width="0.9"/></svg>
<div class="t" style="left:759.52px;top:594px;font-size:12.25px;line-height:12.25px;font-weight:normal;color:#000;">Next (F6)</div>
<div class="b" style="left:6px;top:621px;width:280px;height:1px;background:#111111;"></div>
<div class="b" style="left:7px;top:622px;width:278px;height:1px;background:#FFFFFF;"></div>
<div class="b" style="left:285px;top:621px;width:1px;height:23px;background:#111111;"></div>
<div class="b" style="left:7px;top:643px;width:277px;height:1px;background:#111111;"></div>
<div class="b" style="left:7px;top:644px;width:278px;height:2px;background:#F4F7FB;"></div>
<div class="t" style="left:124.52px;top:627px;font-size:12.2px;line-height:12.2px;font-weight:normal;color:#000;">Header</div>
<div class="b" style="left:286px;top:645px;width:279px;height:1px;background:#111111;"></div>
<div class="t" style="left:409.20px;top:629px;font-size:12.5px;line-height:12.5px;font-weight:normal;color:#000;-webkit-text-stroke:0.35px #000;">Lines</div>
<div class="b" style="left:565px;top:621px;width:281px;height:1px;background:#111111;"></div>
<div class="b" style="left:566px;top:622px;width:278px;height:1px;background:#FFFFFF;"></div>
<div class="b" style="left:565px;top:621px;width:1px;height:23px;background:#111111;"></div>
<div class="b" style="left:844px;top:622px;width:1px;height:20px;background:#111111;"></div>
<div class="b" style="left:566px;top:643px;width:277px;height:1px;background:#111111;"></div>
<div class="b" style="left:843px;top:642px;width:1px;height:1px;background:#111111;"></div>
<div class="b" style="left:566px;top:644px;width:279px;height:2px;background:#F4F7FB;"></div>
<div class="t" style="left:683.02px;top:627px;font-size:12.2px;line-height:12.2px;font-weight:normal;color:#000;">Finalise</div>
<div class="b" style="left:1px;top:646px;width:848px;height:1px;background:#111111;"></div>
<div class="b" style="left:1px;top:647px;width:848px;height:1px;background:#FFFFFF;"></div>
<div class="b" style="left:36px;top:649px;width:777px;height:24px;border-left:1px solid #A0A0A0;border-top:1px solid #A0A0A0;box-sizing:border-box;"></div>
<div class="b" style="left:813px;top:649px;width:1px;height:24px;background:#FFFFFF;"></div>
<div class="t" style="left:38.73px;top:655px;font-size:12.08px;line-height:12.08px;font-weight:normal;color:#000;">Enter a BBS Code, Manf Part No, EzCode, Web Code, Supplier Code, APN, Alpha Ref+*, Prod Desc+* or *Keyword* to search</div>
<div class="b" style="left:845px;top:661px;width:2px;height:2px;background:#B0B0B0;"></div>
<div class="b" style="left:841px;top:665px;width:2px;height:2px;background:#B0B0B0;"></div>
<div class="b" style="left:845px;top:665px;width:2px;height:2px;background:#B0B0B0;"></div>
<div class="b" style="left:837px;top:669px;width:2px;height:2px;background:#B0B0B0;"></div>
<div class="b" style="left:841px;top:669px;width:2px;height:2px;background:#B0B0B0;"></div>
<div class="b" style="left:845px;top:669px;width:2px;height:2px;background:#B0B0B0;"></div>
</body></html>
